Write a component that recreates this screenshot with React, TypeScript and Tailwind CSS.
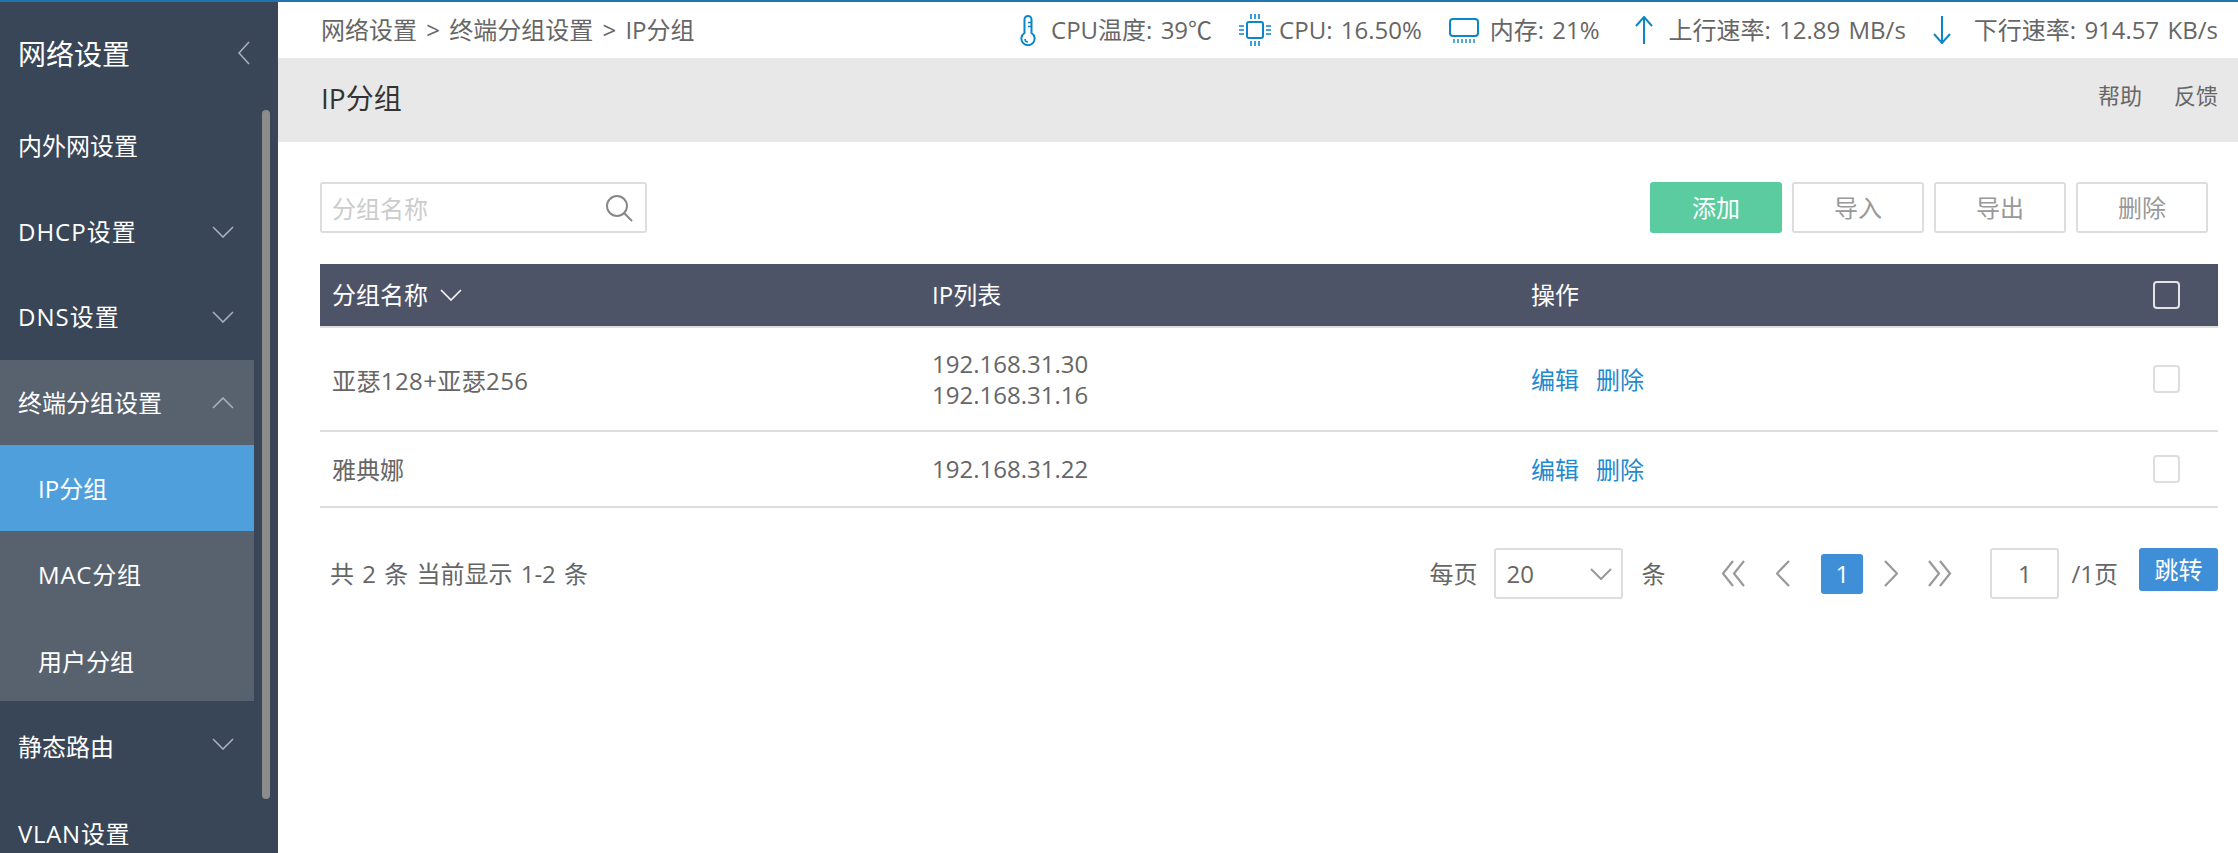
import React from "react";

function Chev({ dir = "down", w = 22, h = 12, color = "#a9b0ba", sw = 1.6 }: { dir?: "down" | "up" | "left" | "right"; w?: number; h?: number; color?: string; sw?: number }) {
  const pts =
    dir === "down" ? `1,1 ${w / 2},${h - 1} ${w - 1},1` :
    dir === "up" ? `1,${h - 1} ${w / 2},1 ${w - 1},${h - 1}` :
    dir === "left" ? `${w - 1},1 1,${h / 2} ${w - 1},${h - 1}` :
    `1,1 ${w - 1},${h / 2} 1,${h - 1}`;
  return (
    <svg width={w} height={h} viewBox={`0 0 ${w} ${h}`} fill="none" className="shrink-0">
      <polyline points={pts} stroke={color} strokeWidth={sw} />
    </svg>
  );
}

function DoubleChev({ dir }: { dir: "left" | "right" }) {
  const a = dir === "left" ? "12,1 2,13.5 12,26" : "2,1 12,13.5 2,26";
  const b = dir === "left" ? "23,1 13,13.5 23,26" : "13,1 23,13.5 13,26";
  return (
    <svg width="25" height="27" viewBox="0 0 25 27" fill="none" className="shrink-0">
      <polyline points={a} stroke="#999999" strokeWidth="2.2" />
      <polyline points={b} stroke="#999999" strokeWidth="2.2" />
    </svg>
  );
}

const Thermo = () => (
  <svg width="16" height="31" viewBox="0 0 16 31" fill="none" stroke="#0b86c8" strokeWidth="2" className="shrink-0">
    <path d="M4.5 18V4.5a3.5 3.5 0 0 1 7 0V18a6.6 6.6 0 1 1-7 0Z" />
    <path d="M8 7.5h3.5M8 11.5h3.5" strokeWidth="1.6" />
    <path d="M5 24a3 3 0 0 0 3 3" strokeWidth="1.6" />
  </svg>
);

const Chip = () => (
  <svg width="34" height="34" viewBox="0 0 34 34" fill="none" stroke="#0b86c8" strokeWidth="2" className="shrink-0">
    <rect x="9" y="9" width="16" height="16" rx="2" />
    <path d="M13 1v5M17 1v5M21 1v5M13 28v5M17 28v5M21 28v5M1 13h5M1 17h5M1 21h5M28 13h5M28 17h5M28 21h5" strokeWidth="1.6" />
  </svg>
);

const Mem = () => (
  <svg width="30" height="25" viewBox="0 0 30 25" fill="none" stroke="#0b86c8" strokeWidth="2" className="shrink-0">
    <rect x="1" y="1" width="28" height="17" rx="3" />
    <path d="M5 21v4M9 21v4M13 21v4M17 21v4M21 21v4M25 21v4" strokeWidth="1.4" />
  </svg>
);

const Arrow = ({ down }: { down?: boolean }) => (
  <svg width="18" height="28" viewBox="0 0 18 28" fill="none" stroke="#0b86c8" strokeWidth="2" className="shrink-0">
    {down ? <path d="M9 0v27M1 18l8 9 8-9" /> : <path d="M9 28V1M1 10l8-9 8 9" />}
  </svg>
);

const Check = ({ head }: { head?: boolean }) => (
  <div className={`w-[27px] h-[28px] rounded-[4px] border-2 ${head ? "border-[#e4e4e4]" : "border-[#dddddd]"}`} />
);

const OutlineBtn = ({ label }: { label: string }) => (
  <div className="w-[132px] h-[51px] rounded-[3px] border-2 border-[#dddddd] text-[#999999] flex items-center justify-center">{label}</div>
);

const Actions = () => (
  <div className="flex gap-[17px] text-[#1e8ad0] pt-[2px]">
    <span>编辑</span>
    <span>删除</span>
  </div>
);

export default function App() {
  return (
    <div className="w-[2238px] h-[853px] overflow-hidden bg-white text-[24px] leading-[32px] text-[#666666] font-['Open_Sans','Noto_Sans_CJK_SC',sans-serif] flex flex-col">
      <div className="h-[2px] bg-[#1f74ae] shrink-0" />
      <div className="flex flex-1 min-h-0">
        <aside className="w-[278px] shrink-0 bg-[#394657] relative overflow-hidden text-white">
          <div className="h-[102px] flex items-center justify-between pl-[18px] pr-[28px] text-[28px]">
            <span className="pt-[2px]">网络设置</span>
            <Chev dir="left" w={12} h={24} />
          </div>
          <div className="w-[254px]">
            <div className="h-[85.33px] flex items-center pl-[18px] pb-[2px]">内外网设置</div>
            <div className="h-[85.33px] flex items-center justify-between pl-[18px] pr-[20px]">
              <span className="tracking-[1px]">DHCP设置</span>
              <Chev dir="down" />
            </div>
            <div className="h-[85.33px] flex items-center justify-between pl-[18px] pr-[20px]">
              <span className="tracking-[1px]">DNS设置</span>
              <Chev dir="down" />
            </div>
            <div className="bg-[#58626f]">
              <div className="h-[85.33px] flex items-center justify-between pl-[18px] pr-[20px]">
                <span>终端分组设置</span>
                <Chev dir="up" />
              </div>
              <div className="h-[85.33px] flex items-center pl-[38px] pt-[2px] bg-[#4f9fdc]">IP分组</div>
              <div className="h-[85.33px] flex items-center pl-[38px] pt-[4px] tracking-[0.8px]">MAC分组</div>
              <div className="h-[85.33px] flex items-center pl-[38px] pt-[6px]">用户分组</div>
            </div>
            <div className="h-[85.33px] flex items-center justify-between pl-[18px] pr-[20px]">
              <span className="pt-[6px]">静态路由</span>
              <Chev dir="down" />
            </div>
            <div className="h-[85.33px] flex items-center pl-[18px] pt-[10px] tracking-[0.7px]">VLAN设置</div>
          </div>
          <div className="absolute left-[262px] top-[108px] w-[8px] h-[689px] rounded-full bg-[#8c8c8c]" />
        </aside>

        <main className="flex-1 min-w-0 flex flex-col">
          <div className="h-[56px] shrink-0 flex items-center justify-between pl-[43px] pr-[20px] text-[#666666]">
            <span className="whitespace-nowrap [word-spacing:3px]">网络设置 &gt; 终端分组设置 &gt; IP分组</span>
            <div className="flex items-center whitespace-nowrap [word-spacing:2px]">
              <Thermo />
              <span className="ml-[15px]">CPU温度: 39℃</span>
              <span className="ml-[26px]"><Chip /></span>
              <span className="ml-[7px]">CPU: 16.50%</span>
              <span className="ml-[27px]"><Mem /></span>
              <span className="ml-[11px]">内存: 21%</span>
              <span className="ml-[35px]"><Arrow /></span>
              <span className="ml-[16px]">上行速率: 12.89 MB/s</span>
              <span className="ml-[27px]"><Arrow down /></span>
              <span className="ml-[23px]">下行速率: 914.57 KB/s</span>
            </div>
          </div>

          <div className="h-[84px] shrink-0 bg-[#e8e8e8] flex justify-between pl-[43px] pr-[20px]">
            <span className="text-[28px] text-[#333333] mt-[24px] leading-[32px]">IP分组</span>
            <div className="flex gap-[32px] text-[22px] text-[#666666] mt-[21px]">
              <span>帮助</span>
              <span>反馈</span>
            </div>
          </div>

          <div className="pl-[42px] pr-[20px] pt-[40px]">
            <div className="flex justify-between items-center">
              <div className="w-[327px] h-[51px] rounded-[3px] border-2 border-[#dddddd] flex items-center justify-between pl-[10px] pr-[12px]">
                <span className="text-[#cccccc] pt-[2px]">分组名称</span>
                <svg width="28" height="28" viewBox="0 0 28 28" fill="none" stroke="#888888" strokeWidth="2">
                  <circle cx="12" cy="12" r="10" />
                  <path d="M19 19l8 8" />
                </svg>
              </div>
              <div className="flex gap-[10px] mr-[10px]">
                <div className="w-[132px] h-[51px] rounded-[3px] bg-[#5acc9f] text-white flex items-center justify-center">添加</div>
                <OutlineBtn label="导入" />
                <OutlineBtn label="导出" />
                <OutlineBtn label="删除" />
              </div>
            </div>

            <div className="mt-[31px]">
              <div className="h-[64px] bg-[#4e5468] border-b-2 border-[#dddddd] grid grid-cols-[600px_599px_1fr_65px] items-center text-white">
                <div className="pl-[12px] flex items-center gap-[12px]">
                  <span>分组名称</span>
                  <Chev dir="down" color="#ffffff" w={22} h={12} />
                </div>
                <div className="pl-[12px]">IP列表</div>
                <div className="pl-[12px]">操作</div>
                <Check head />
              </div>
              <div className="h-[104px] border-b-2 border-[#dddddd] grid grid-cols-[600px_599px_1fr_65px] items-center">
                <div className="pl-[12px] pt-[3px] tracking-[0.4px]">亚瑟128+亚瑟256</div>
                <div className="pl-[12px] leading-[31px]">192.168.31.30<br />192.168.31.16</div>
                <div className="pl-[12px]"><Actions /></div>
                <Check />
              </div>
              <div className="h-[76px] border-b-2 border-[#dddddd] grid grid-cols-[600px_599px_1fr_65px] items-center">
                <div className="pl-[12px] pt-[2px]">雅典娜</div>
                <div className="pl-[12px]">192.168.31.22</div>
                <div className="pl-[12px]"><Actions /></div>
                <Check />
              </div>
            </div>

            <div className="mt-[40px] h-[51px] flex items-center justify-between">
              <span className="pl-[10px] whitespace-nowrap [word-spacing:2px]">共 2 条 当前显示 1-2 条</span>
              <div className="flex items-center whitespace-nowrap">
                <span>每页</span>
                <div className="ml-[17px] w-[129px] h-[51px] rounded-[3px] border-2 border-[#dddddd] flex items-center justify-between pl-[10px] pr-[9px]">
                  <span>20</span>
                  <Chev dir="down" color="#999999" sw={2} />
                </div>
                <span className="ml-[18px]">条</span>
                <span className="ml-[56px]"><DoubleChev dir="left" /></span>
                <span className="ml-[30px]"><Chev dir="left" w={14} h={27} color="#999999" sw={2.2} /></span>
                <div className="ml-[31px] w-[42px] h-[40px] rounded-[3px] bg-[#3f8fd8] text-white flex items-center justify-center">1</div>
                <span className="ml-[21px]"><Chev dir="right" w={14} h={27} color="#999999" sw={2.2} /></span>
                <span className="ml-[29px]"><DoubleChev dir="right" /></span>
                <div className="ml-[38px] w-[69px] h-[51px] rounded-[3px] border-2 border-[#dddddd] flex items-center justify-center">1</div>
                <span className="ml-[12px]">/1页</span>
                <div className="ml-[21px] w-[79px] h-[43px] -mt-[8px] rounded-[3px] bg-[#3f8fd8] text-white flex items-center justify-center">跳转</div>
              </div>
            </div>
          </div>
        </main>
      </div>
    </div>
  );
}
